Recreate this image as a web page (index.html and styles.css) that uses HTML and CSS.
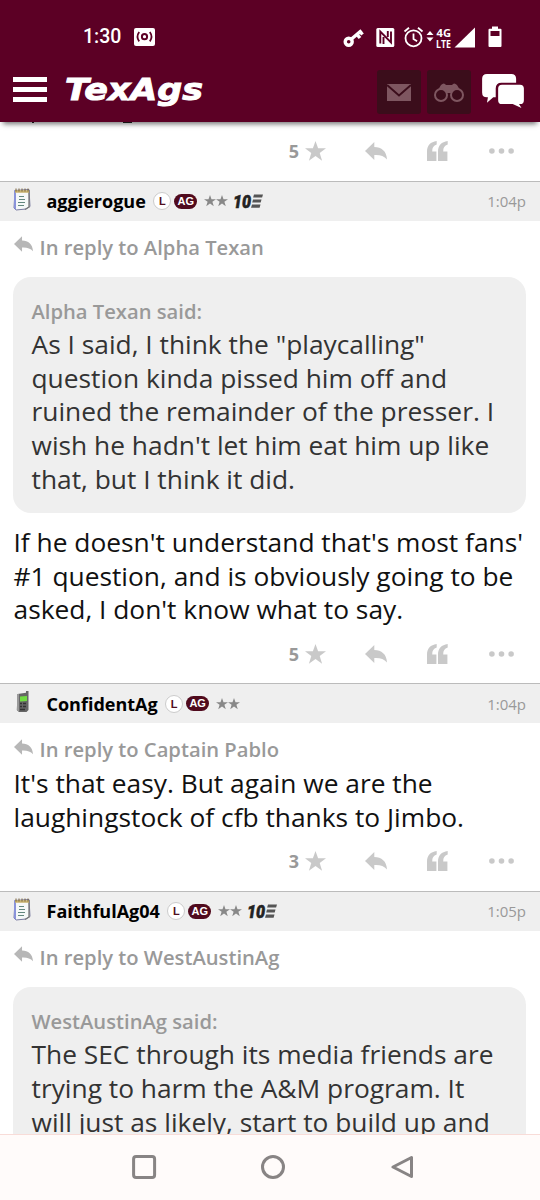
FILE: index.html
```html
<!DOCTYPE html>
<html lang="en">
<head>
<meta charset="utf-8">
<title>TexAgs</title>
<link rel="stylesheet" href="styles.css">
</head>
<body>
<svg class="defs" aria-hidden="true">
  <symbol id="star" viewBox="0 0 21 20"><path d="M10.5 0l2.6 7.3H21l-6.3 4.6 2.4 7.8-6.6-4.8-6.6 4.8 2.4-7.8L0 7.3h7.9z"/></symbol>
  <symbol id="reply" viewBox="0 0 22 18"><path d="M0 9L9.3 0v4.9C16.500 5.200 21.600 8.800 22 17.500C19 13.800 15 12.700 9.300 13v5z"/></symbol>
  <symbol id="quote" viewBox="0 0 21 20"><path d="M9.700 0v3.600C6.500 4.600 5.200 6.800 5.200 10.400h4.200V20H0V10.500C0 4.500 3.500.800 9.700 0z"/><path d="M20.700 0v3.600C17.500 4.600 16.200 6.800 16.200 10.400h4.200V20H11V10.500C11 4.500 14.500.800 20.700 0z"/></symbol>
  <symbol id="dots" viewBox="0 0 25 6"><circle cx="2.900" cy="3" r="2.800"/><circle cx="12.500" cy="3" r="2.800"/><circle cx="22.100" cy="3" r="2.800"/></symbol>
  <symbol id="pad" viewBox="0 0 18 23"><path d="M2 2.500L16 1.500L17 18.500L13 21L3 22L1 20z" fill="#f5f8f8" stroke="#7779a0" stroke-width="1"/><path d="M1 2v18l2 2V3z" fill="#8993da"/><path d="M16 2v17l-4 2.500" fill="none" stroke="#777" stroke-width="1.300"/><path d="M2 3.500h14" stroke="#c6b16d" stroke-width="2.500"/><path d="M3 .500v3M6 .500v3M9 .500v3M12 .500v3M15 .500v3" stroke="#786339" stroke-width="1"/><path d="M6 8.500h5M6 11.500h6M5 14.500h7M5 17.500h6" stroke="#62877f" stroke-width="1.200"/></symbol>
  <symbol id="phone" viewBox="0 0 14 22"><path d="M1.500 3L10 1.800V0h2.500v19L10.500 21H3L.800 19z" fill="#666"/><path d="M1 3v16l2 2V3z" fill="#999"/><path d="M4 5.500l7-.500v5l-7 .500z" fill="#71dc42"/><path d="M4 12.500h2M7 12.500h3M4 15.500h2M7 15.500h3M4 18.500h5" stroke="#333" stroke-width="1.500"/></symbol>
</svg>

<div class="screen">
  <header class="top">
    <div class="status">
      <span class="clock">1:30</span>
      <svg class="cast" viewBox="0 0 21 18"><rect width="21" height="18" rx="2" fill="#fff"/><g fill="none" stroke="#5c0025"><circle cx="10.500" cy="8.700" r="2.600" stroke-width="2"/><path d="M5.200 4Q1.800 8.700 5.200 13.400M15.800 4q3.400 4.700 0 9.400" stroke-width="1.800"/></g></svg>
      <svg class="signals" viewBox="343 20 160 32" fill="#fff">
        <g fill="none" stroke="#fff"><circle cx="348.700" cy="40.800" r="3.500" stroke-width="3.400"/><path d="M351.500 38l10-8.500M357 33.500l3 3.500M360 30.500l2.500 3" stroke-width="3.400"/></g>
        <rect x="376.300" y="27" width="18" height="19" rx="1.500"/><path d="M380.300 42.500V30.500L391 41.500V30.500M383.500 43V36M387.800 36V30" fill="none" stroke="#5c0025" stroke-width="1.900"/>
        <g fill="none" stroke="#fff" stroke-width="1.800"><circle cx="413.500" cy="37.300" r="8"/><path d="M413.500 32.500v5.500l3.600 2.200M404.500 30.500l4.500-3.800M422.500 30.500L418 26.700"/></g>
        <path d="M430 30l3.500 4h-7zM430 40.500l3.500-4h-7z"/>
        <text class="lte" x="436.500" y="36.200" textLength="14.500" lengthAdjust="spacingAndGlyphs">4G</text><text class="lte" x="436" y="46.700" textLength="15" lengthAdjust="spacingAndGlyphs">LTE</text>
        <path d="M475 26.500V46.500H454.500z"/>
        <path d="M492 25.500h6v2.200h2.500q1 0 1 1V45q0 1-1 1H489.500q-1 0-1-1V28.700q0-1 1-1H492z"/><path d="M490.500 30h9v5h-9z" fill="#5c0025"/>
      </svg>
    </div>
    <div class="bar">
      <span class="menu"><i></i><i></i><i></i></span>
      <svg class="logo" viewBox="0 0 150 48"><text x="2" y="31.500" textLength="138" lengthAdjust="spacingAndGlyphs">TexAgs</text></svg>
      <span class="tile"><svg width="24" height="17" viewBox="0 0 24 17"><rect width="24" height="17" fill="#7e5660"/><path d="M0 1l12 10.500L24 1" fill="none" stroke="#3b0d1b" stroke-width="2"/></svg></span>
      <span class="tile"><svg width="30" height="19" viewBox="0 0 30 19"><path d="M1 12L7 2q3-3 5 0h6q2-3 5 0l6 10-9 4-3-6h-4l-3 6z" fill="#7e5660"/><g fill="#3b0d1b" stroke="#7e5660" stroke-width="2"><circle cx="7" cy="12" r="6"/><circle cx="23" cy="12" r="6"/></g></svg></span>
      <svg class="chat" viewBox="0 0 43 35"><path d="M5 0H30q5 0 5 5v4H20q-6 0-6 6v9h-2.500L5 29.500l1-5.500H5q-5 0-5-5V5q0-5 5-5z"/><path d="M20.500 11H39q4 0 4 4V27q0 4-4 4h-1l2.500 4-9-4h-11q-4 0-4-4V15q0-4 4-4z"/></svg>
    </div>
  </header>

  <main class="thread">
    <div class="cut"><i class="cut-a"></i><i class="cut-b"></i></div>
    <div class="actions"><b>5</b><svg class="a-star"><use href="#star"/></svg><svg class="a-reply"><use href="#reply"/></svg><svg class="a-quote"><use href="#quote"/></svg><svg class="a-dots"><use href="#dots"/></svg></div>

    <article>
      <div class="head"><span class="avatar"><svg class="pad"><use href="#pad"/></svg></span><b class="name">aggierogue</b><span class="l">L</span><span class="ag">AG</span><svg class="s"><use href="#star"/></svg><svg class="s"><use href="#star"/></svg><svg class="ten" viewBox="0 0 30 23"><text x="0" y="18" textLength="18" lengthAdjust="spacingAndGlyphs">10</text><path d="M21 4.500h9l-.900 3h-9zM20 9.500h8.500l-.800 3h-8.500zM19 14.500h8.500l-.900 3.300H18z"/></svg><time>1:04p</time></div>
      <div class="body">
        <div class="to"><svg><use href="#reply"/></svg><span>In reply to Alpha Texan</span></div>
        <blockquote><div class="said">Alpha Texan said:</div>As I said, I think the "playcalling"<br>question kinda pissed him off and<br>ruined the remainder of the presser. I<br>wish he hadn't let him eat him up like<br>that, but I think it did.</blockquote>
        <p>If he doesn't understand that's most fans'<br>#1 question, and is obviously going to be<br>asked, I don't know what to say.</p>
      </div>
      <div class="actions"><b>5</b><svg class="a-star"><use href="#star"/></svg><svg class="a-reply"><use href="#reply"/></svg><svg class="a-quote"><use href="#quote"/></svg><svg class="a-dots"><use href="#dots"/></svg></div>
    </article>

    <article>
      <div class="head"><span class="avatar"><svg class="phone"><use href="#phone"/></svg></span><b class="name">ConfidentAg</b><span class="l">L</span><span class="ag">AG</span><svg class="s"><use href="#star"/></svg><svg class="s"><use href="#star"/></svg><time>1:04p</time></div>
      <div class="body">
        <div class="to"><svg><use href="#reply"/></svg><span>In reply to Captain Pablo</span></div>
        <p>It's that easy. But again we are the<br>laughingstock of cfb thanks to Jimbo.</p>
      </div>
      <div class="actions"><b>3</b><svg class="a-star"><use href="#star"/></svg><svg class="a-reply"><use href="#reply"/></svg><svg class="a-quote"><use href="#quote"/></svg><svg class="a-dots"><use href="#dots"/></svg></div>
    </article>

    <article>
      <div class="head"><span class="avatar"><svg class="pad"><use href="#pad"/></svg></span><b class="name">FaithfulAg04</b><span class="l">L</span><span class="ag">AG</span><svg class="s"><use href="#star"/></svg><svg class="s"><use href="#star"/></svg><svg class="ten" viewBox="0 0 30 23"><text x="0" y="18" textLength="18" lengthAdjust="spacingAndGlyphs">10</text><path d="M21 4.500h9l-.900 3h-9zM20 9.500h8.500l-.800 3h-8.500zM19 14.500h8.500l-.900 3.300H18z"/></svg><time>1:05p</time></div>
      <div class="body">
        <div class="to"><svg><use href="#reply"/></svg><span>In reply to WestAustinAg</span></div>
        <blockquote><div class="said">WestAustinAg said:</div>The SEC through its media friends are<br>trying to harm the A&amp;M program. It<br>will just as likely, start to build up and</blockquote>
      </div>
    </article>
  </main>

  <nav class="nav">
    <svg viewBox="0 0 26 26"><rect x="1.600" y="1.600" width="21" height="21" rx="2.500"/></svg>
    <svg viewBox="0 0 26 26"><circle cx="12" cy="12" r="10.500"/></svg>
    <svg viewBox="0 0 26 26"><path d="M20.500 2.500V21.500L2 12z" stroke-linejoin="round"/></svg>
  </nav>
</div>
</body>
</html>
```
FILE: styles.css
```css
* { box-sizing: border-box; }
body { margin: 0; background: #fff; font-family: "Open Sans", sans-serif; color: #111; }
svg { display: block; flex: none; }
.defs { position: absolute; width: 0; height: 0; }
.screen { width: 540px; height: 1200px; display: flex; flex-direction: column; overflow: hidden; }

.top { flex: none; height: 122px; background: #5c0025; box-shadow: 0 5px 5px -3px rgba(0,0,0,.55); z-index: 1; }
.status { height: 62px; display: flex; align-items: center; padding: 11px 37px 0 83px; color: #fff; }
.clock { width: 51px; font: 500 19.500px/24px Roboto, sans-serif; }
.cast { width: 21px; height: 18px; }
.signals { width: 160px; height: 32px; margin-left: auto; }
.lte { font: 700 11px "Open Sans", sans-serif; }
.bar { height: 60px; display: flex; align-items: center; padding: 0 16px 0 13px; }
.menu { width: 34px; display: grid; gap: 5.300px; margin: 0 16px 5px 0; }
.menu i { height: 4.500px; background: #fff; }
.logo { width: 150px; height: 48px; margin-right: auto; }
.logo text { font: italic 700 31px "DejaVu Sans", sans-serif; fill: #fff; stroke: #fff; stroke-width: 1; }
.tile { width: 44px; height: 44px; margin-right: 6px; background: #3b0d1b; border-radius: 3px; display: grid; place-items: center; }
.chat { width: 42px; height: 34px; fill: #fff; margin: 0 0 2px 5px; }

.thread { flex: 1; min-height: 0; overflow: hidden; }
.cut { height: 2px; display: flex; }
.cut i { height: 1px; background: #222; }
.cut-a { width: 2px; margin-left: 32px; }
.cut-b { width: 9px; margin-left: 89px; }

.actions { height: 56.500px; padding: 0 26px 3px 0; display: flex; align-items: center; justify-content: flex-end; fill: #c9c9c9; }
.actions b { margin-right: 6px; color: #999; font-size: 18px; font-weight: 700; }
.a-star { width: 21px; height: 20px; margin-right: 39px; }
.a-reply { width: 22px; height: 18px; margin-right: 40px; }
.a-quote { width: 21px; height: 20px; margin-right: 41px; }
.a-dots { width: 25px; height: 6px; }

.head { height: 40px; display: flex; align-items: center; padding: 0 14px 0 13px; background: #efefef; border-top: 1.500px solid #bbb; }
.avatar { width: 33.500px; margin-top: -3px; }
.pad { width: 18px; height: 23px; }
.phone { width: 14px; height: 22px; margin-left: 3px; }
.name { font-size: 18px; color: #000; margin-right: 7.500px; }
.l { width: 18px; height: 18px; border-radius: 50%; border: 1px solid #ccc; background: #fff; color: #500f20; font: 700 11px/16px "Liberation Sans", sans-serif; text-align: center; }
.ag { width: 23px; height: 15px; margin: 0 7px 0 3px; border-radius: 8px; background: #500a1d; color: #fff; font: 700 11px/15px "Liberation Sans", sans-serif; text-align: center; }
.s { width: 12px; height: 11.500px; fill: #888; }
.ten { width: 30px; height: 23px; margin-left: 4.500px; fill: #555; }
.ten text { font: italic 900 18px Roboto, sans-serif; fill: #222; stroke: #222; stroke-width: .6; }
.head time { margin-left: auto; color: #999; font-size: 15px; }

.body { padding: 10px 14px 0 13.500px; font-size: 26.340px; line-height: 33.600px; white-space: nowrap; }
.to { display: flex; align-items: center; color: #999; font-size: 20.200px; font-weight: 600; }
.to svg { width: 19px; height: 16px; margin: -7px 7px 0 0; fill: #b7b7b7; }
blockquote { margin: 12.500px 0 13px -.500px; padding: 18px 18px 17px 18.500px; border-radius: 18px; background: #efefef; color: #333; }
.said { color: #999; font-size: 20.200px; font-weight: 600; }
p { margin: 0; }

.nav { flex: none; height: 66px; border-top: 1px solid #f8dcd8; background: #fffbfa; display: flex; gap: 103.500px; padding: 20px 0 0 131.500px; }
.nav svg { width: 26px; height: 26px; fill: none; stroke: #888484; stroke-width: 3; }
```
